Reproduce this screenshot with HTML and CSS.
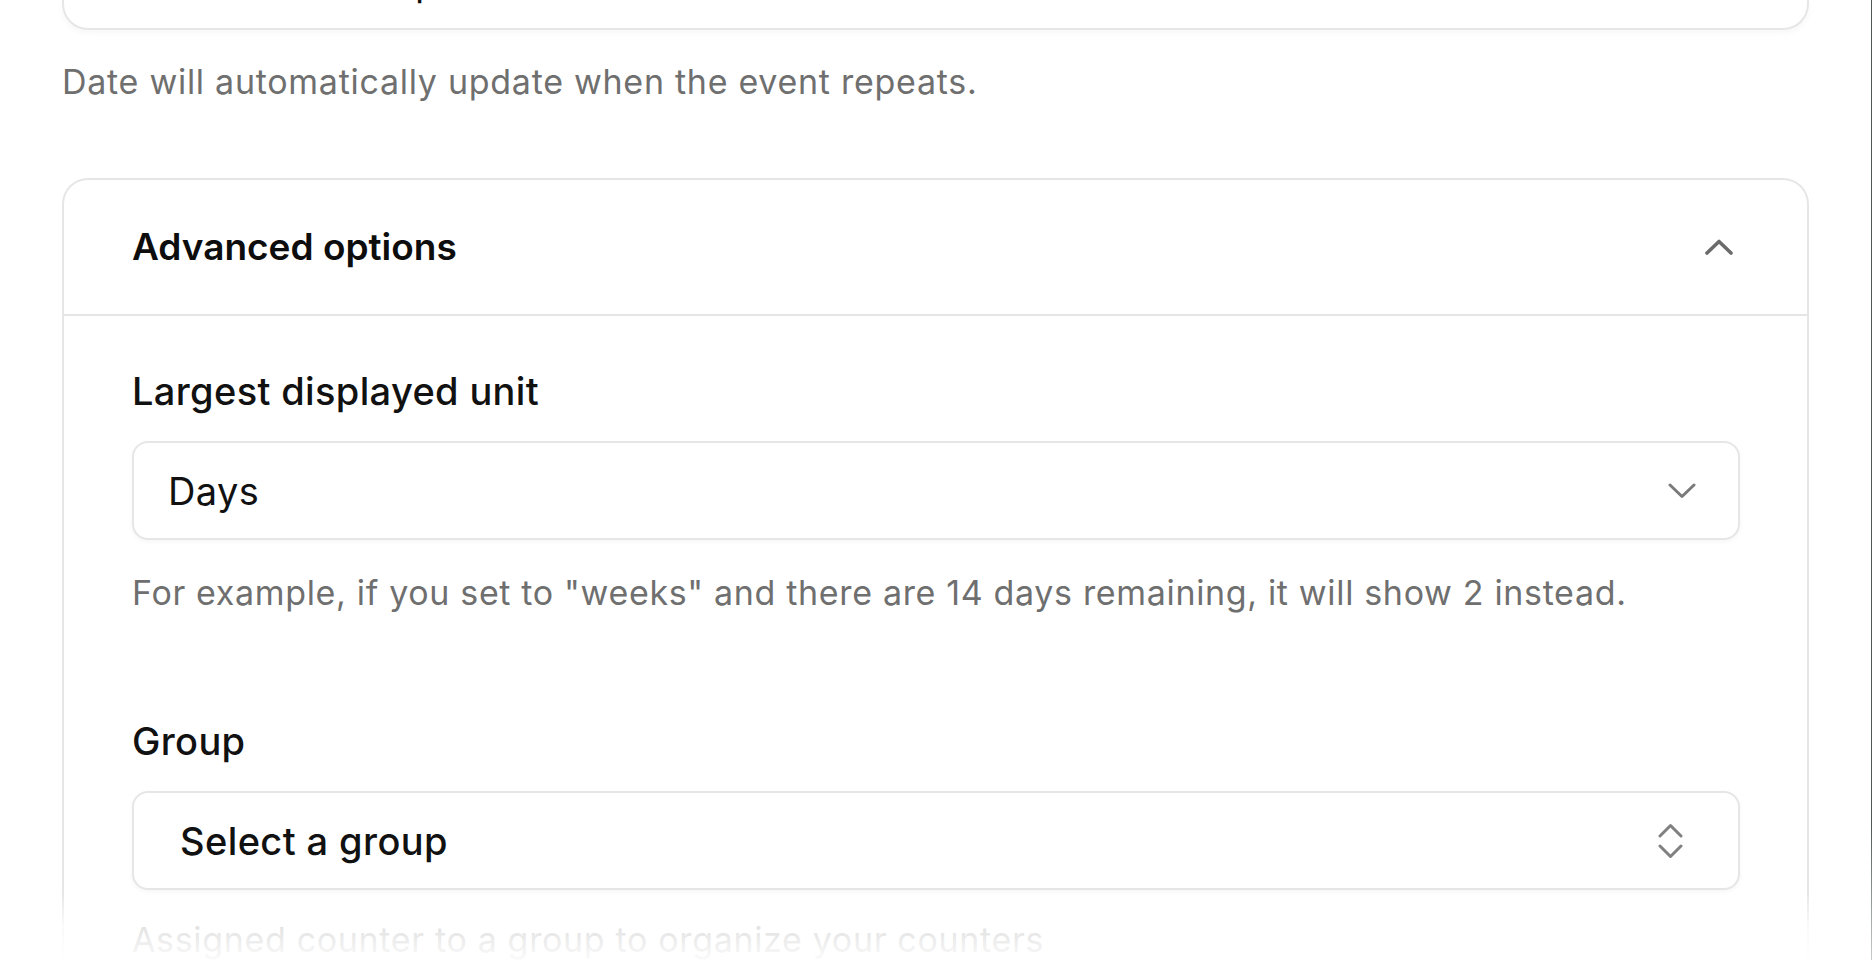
FILE: index.html
```html
<!DOCTYPE html>
<html lang="en">
<head>
<meta charset="utf-8">
<title>Advanced options</title>
<link rel="stylesheet" href="styles.css">
</head>
<body>
<div class="viewport">
  <div class="page">
    <div class="prev-card">
      <span class="prev-value">p</span>
    </div>
    <p class="hint">Date will automatically update when the event repeats.</p>

    <section class="card">
      <header class="card-header">
        <h2 class="card-title">Advanced options</h2>
        <svg class="icon-up" width="28" height="16" viewBox="0 0 28 16" aria-hidden="true">
          <polyline points="2,14 14,2.5 26,14" fill="none" stroke="#6b6b6b" stroke-width="3.6" stroke-linecap="round" stroke-linejoin="round"/>
        </svg>
      </header>
      <div class="card-body">
        <div class="field">
          <label class="field-label">Largest displayed unit</label>
          <div class="select select-native">
            <span class="select-value">Days</span>
            <svg class="icon-down" width="28" height="16" viewBox="0 0 28 16" aria-hidden="true">
              <polyline points="2,2 14,13.5 26,2" fill="none" stroke="#7a7a7a" stroke-width="3" stroke-linecap="round" stroke-linejoin="round"/>
            </svg>
          </div>
          <p class="field-help">For example, if you set to "weeks" and there are 14 days remaining, it will show 2 instead.</p>
        </div>

        <div class="field field-group">
          <label class="field-label">Group</label>
          <div class="select select-custom">
            <span class="select-value select-value-strong">Select a group</span>
            <svg class="icon-updown" width="25" height="36" viewBox="0 0 25 36" aria-hidden="true">
              <polyline points="2,13 12.5,2.5 23,13" fill="none" stroke="#808080" stroke-width="3" stroke-linecap="round" stroke-linejoin="round"/>
              <polyline points="2,23 12.5,33.5 23,23" fill="none" stroke="#808080" stroke-width="3" stroke-linecap="round" stroke-linejoin="round"/>
            </svg>
          </div>
          <p class="field-help">Assigned counter to a group to organize your counters</p>
        </div>
      </div>
    </section>
  </div>
  <div class="fade"></div>
</div>
</body>
</html>
```
FILE: styles.css
```css
* {
  box-sizing: border-box;
}

html, body {
  margin: 0;
  padding: 0;
  background: #ffffff;
}

body {
  font-family: "Inter", "Noto Sans", sans-serif;
  color: #111111;
  overflow: hidden;
}

.viewport {
  position: relative;
  width: 1872px;
  height: 960px;
  overflow: hidden;
}

.viewport::after {
  content: "";
  position: absolute;
  top: 0;
  right: 0;
  bottom: 0;
  width: 1px;
  background: linear-gradient(to bottom, #4f5957 0%, #4f5957 86%, #c9cdcc 100%);
}

.page {
  padding: 0 63px 0 62px;
}

.prev-card {
  display: flex;
  align-items: flex-start;
  height: 30px;
  border: 2px solid #e6e6e6;
  border-top: none;
  border-radius: 0 0 26px 26px;
  box-shadow: 0 3px 6px rgba(0, 0, 0, 0.035);
  padding-left: 351px;
}

.prev-value {
  margin-top: -42px;
  font-size: 38px;
  line-height: 48px;
  color: #111111;
}

.hint {
  margin: 28px 0 0;
  font-size: 34px;
  line-height: 48px;
  letter-spacing: 0.72px;
  color: #6f6f6f;
}

.card {
  margin-top: 72px;
  border: 2px solid #e6e6e6;
  border-bottom: none;
  border-radius: 26px 26px 0 0;
  background: #ffffff;
}

.card-header {
  display: flex;
  align-items: center;
  justify-content: space-between;
  height: 136px;
  padding: 0 74px 0 68px;
  border-bottom: 2px solid #e6e6e6;
}

.card-title {
  margin: 0;
  font-size: 37px;
  line-height: 48px;
  font-weight: 600;
  letter-spacing: 0;
  color: #0d0d0d;
}

.card-body {
  padding: 51px 67px 0 68px;
}

.field-label {
  display: block;
  font-size: 38px;
  line-height: 48px;
  font-weight: 500;
  letter-spacing: 0.35px;
  color: #111111;
}

.select {
  display: flex;
  align-items: center;
  justify-content: space-between;
  height: 99px;
  margin-top: 26px;
  border: 2px solid #e6e6e6;
  border-radius: 16px;
  background: #ffffff;
  box-shadow: 0 2px 5px rgba(0, 0, 0, 0.04);
}

.select-native {
  padding: 0 42px 0 34px;
}

.select-custom {
  margin-top: 26px;
  padding: 0 55px 0 46px;
}

.select-value {
  font-size: 38px;
  line-height: 48px;
  letter-spacing: 0.4px;
  color: #111111;
}

.select-value-strong {
  font-weight: 500;
}

.field-help {
  margin: 29px 0 0;
  font-size: 34px;
  line-height: 48px;
  letter-spacing: 0.66px;
  color: #6f6f6f;
}

.field-group {
  margin-top: 100px;
}

.field-group .field-help {
  margin-top: 26px;
}

.fade {
  position: absolute;
  left: 0;
  right: 1px;
  bottom: 0;
  height: 68px;
  background: linear-gradient(to bottom, rgba(255, 255, 255, 0) 0%, rgba(255, 255, 255, 0.8) 50%, rgba(255, 255, 255, 0.97) 100%);
  pointer-events: none;
}
```
